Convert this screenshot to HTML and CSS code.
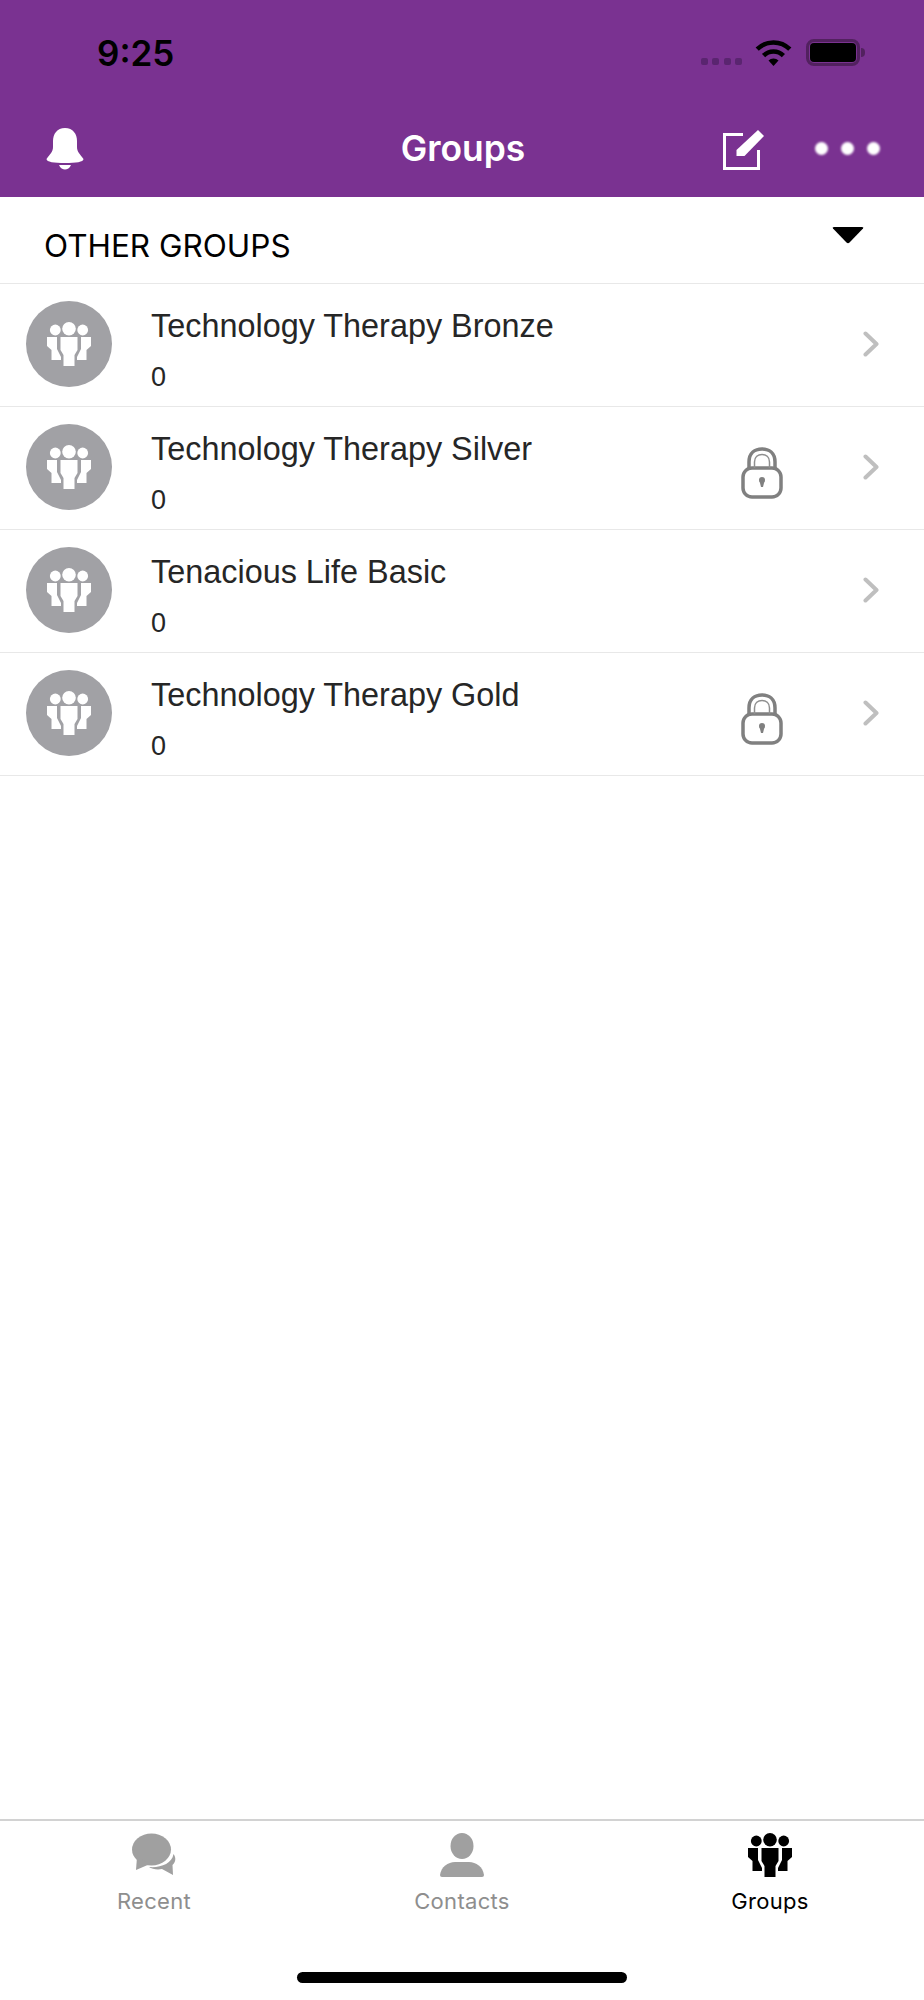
FILE: index.html
```html
<!DOCTYPE html>
<html lang="en">
<head>
<meta charset="utf-8">
<title>Groups</title>
<link rel="stylesheet" href="styles.css">
</head>
<body>
<svg class="defs" width="0" height="0" aria-hidden="true">
  <symbol id="people" viewBox="0 0 44 44">
    <circle cx="8.300" cy="8" r="5.400"/><circle cx="35.700" cy="8" r="5.400"/><circle cx="22" cy="6.800" r="6.800"/>
    <path d="M13.500 15H30.500V28L27.500 33V44H16.500V33L13.500 28Z"/>
    <path d="M0 15H10V27L14 35V38H4.500V28L0 24Z"/>
    <path d="M44 15H34V27L30 35V38H39.500V28L44 24Z"/>
  </symbol>
  <symbol id="lock" viewBox="0 0 42 52">
    <rect class="lock-line" x="2" y="21" width="38" height="29" rx="9"/>
    <path class="lock-line" d="M8 21V15C8 6 14 2 21 2S34 6 34 15V21"/>
    <path class="lock-line thin" d="M13.500 21V15C13.500 10 17 7.500 21 7.500S28.500 10 28.500 15V21"/>
    <circle class="lock-fill" cx="21" cy="33" r="3"/><path class="lock-fill" d="M18.500 34H23.500L22 40H20Z"/>
  </symbol>
  <symbol id="chev" viewBox="0 0 16 26"><path class="chev-line" d="M2.500 2.500L13.500 13L2.500 23.500"/></symbol>
</svg>
<div class="app">
  <header class="top">
    <div class="status">
      <span class="time">9:25</span>
      <div class="status-icons">
        <div class="signal"><i></i><i></i><i></i><i></i></div>
        <svg class="wifi" viewBox="0 0 37 27"><path class="wifi-arc" d="M2.200 10.200A23 23 0 0 1 34.800 10.200"/><path class="wifi-arc" d="M8.600 16.600A14 14 0 0 1 28.400 16.600"/><path d="M18.500 27L13.500 21.500A7 7 0 0 1 23.500 21.500Z"/></svg>
        <div class="battery"><div class="battery-fill"></div></div>
        <div class="battery-nub"></div>
      </div>
    </div>
    <nav class="nav">
      <div class="nav-left">
        <svg class="bell" viewBox="0 0 38 42"><path d="M19 0C27 0 31 6 31 13V19C31 24 34 26 37.500 31C37.500 34 30 35 19 35S.5 34 .5 31C4 26 7 24 7 19V13C7 6 11 0 19 0Z"/><path d="M13 37H25C24 40 21 41.500 19 41.500S14 40 13 37Z"/></svg>
      </div>
      <h1 class="title">Groups</h1>
      <div class="nav-right">
        <svg class="edit" viewBox="0 0 42 41"><path class="edit-line" d="M20 4.500H1.500V38.500H35.500V20"/><path d="M13.500 20L35 0L41 6L21.500 26H13.500Z"/></svg>
        <div class="more"><i></i><i></i><i></i></div>
      </div>
    </nav>
  </header>
  <main class="main">
    <div class="section">
      <span class="section-title">OTHER GROUPS</span>
      <svg class="caret" viewBox="0 0 32 18"><path d="M2 1H30Q32 1 31 2.500L17.500 16.500Q16 18 14.500 16.500L1 2.500Q0 1 2 1Z"/></svg>
    </div>
    <div class="row">
      <div class="avatar"><svg class="people"><use href="#people"/></svg></div>
      <div class="info"><div class="name">Technology Therapy Bronze</div><div class="count">0</div></div>
      <svg class="chevron"><use href="#chev"/></svg>
    </div>
    <div class="row">
      <div class="avatar"><svg class="people"><use href="#people"/></svg></div>
      <div class="info"><div class="name">Technology Therapy Silver</div><div class="count">0</div></div>
      <svg class="lock"><use href="#lock"/></svg>
      <svg class="chevron"><use href="#chev"/></svg>
    </div>
    <div class="row">
      <div class="avatar"><svg class="people"><use href="#people"/></svg></div>
      <div class="info"><div class="name">Tenacious Life Basic</div><div class="count">0</div></div>
      <svg class="chevron"><use href="#chev"/></svg>
    </div>
    <div class="row">
      <div class="avatar"><svg class="people"><use href="#people"/></svg></div>
      <div class="info"><div class="name">Technology Therapy Gold</div><div class="count">0</div></div>
      <svg class="lock"><use href="#lock"/></svg>
      <svg class="chevron"><use href="#chev"/></svg>
    </div>
  </main>
  <footer class="tabs">
    <div class="tab-row">
      <div class="tab">
        <svg class="tab-icon" viewBox="0 0 44 44"><ellipse cx="19.500" cy="16.500" rx="19.500" ry="16"/><path d="M5 24L4 37L18 31Z"/><path d="M41.500 21C44.500 25 43.500 29 40.500 32L41 42L30 36C25 37 20 36 17 34C28 35 40 31 41.500 21Z"/></svg>
        <span class="tab-label">Recent</span>
      </div>
      <div class="tab">
        <svg class="tab-icon" viewBox="0 0 44 44"><ellipse cx="22" cy="13" rx="11.500" ry="13"/><path d="M0 42C1 34 8 29 15 29H29C36 29 43 34 44 42Q44 44 42 44H2Q0 44 0 42Z"/></svg>
        <span class="tab-label">Contacts</span>
      </div>
      <div class="tab active">
        <svg class="tab-icon"><use href="#people"/></svg>
        <span class="tab-label">Groups</span>
      </div>
    </div>
    <div class="home"></div>
  </footer>
</div>
</body>
</html>
```
FILE: styles.css
```css
* { box-sizing: border-box; }
html, body { margin: 0; padding: 0; background: #fff; }
.defs { display: block; height: 0; }
.app {
  width: 924px;
  height: 2000px;
  display: flex;
  flex-direction: column;
  overflow: hidden;
  font-family: "Liberation Sans", Arial, sans-serif;
}

/* header */
.top { height: 197px; background: #7a3291; display: flex; flex-direction: column; }
.status { height: 104px; display: flex; justify-content: space-between; padding: 33px 59px 0 97px; }
.time { font: 600 35px/40px Inter, sans-serif; color: #000; }
.status-icons { display: flex; align-items: flex-start; padding-top: 6px; }
.signal { display: flex; gap: 4.500px; margin-top: 19px; margin-right: 13px; }
.signal i { width: 7px; height: 7px; border-radius: 2px; background: #5a2570; }
.wifi { width: 37px; height: 27px; margin-right: 14px; fill: #000; }
.wifi-arc { fill: none; stroke: #000; stroke-width: 4.500; }
.battery { width: 54px; height: 27px; border: 3px solid #52215f; border-radius: 8px; padding: 1px; }
.battery-fill { width: 100%; height: 100%; background: #000; border-radius: 4px; }
.battery-nub { width: 4px; height: 9px; margin-top: 9px; margin-left: 1px; background: #52215f; border-radius: 0 4px 4px 0; }
.nav {
  flex: 1;
  display: grid;
  grid-template-columns: 1fr auto 1fr;
  align-items: start;
  padding: 24px 44px 0 46px;
}
.nav-left { display: flex; }
.nav-right { display: flex; justify-content: flex-end; }
.bell { width: 38px; height: 42px; fill: #fff; }
.title {
  margin: 0;
  text-align: center;
  font: 600 35.400px/42px Inter, sans-serif;
  color: #fff;
}
.edit { width: 42px; height: 41px; margin-top: 2px; margin-right: 50px; fill: #fff; flex: none; }
.edit-line { fill: none; stroke: #fff; stroke-width: 3; }
.more { display: flex; gap: 13px; margin-top: 14px; }
.more i { width: 13px; height: 13px; border-radius: 50%; background: #fff; filter: blur(1px); }

/* list */
.main { flex: 1; }
.section {
  height: 87px;
  border-bottom: 1px solid #e8e8e8;
  display: flex;
  justify-content: space-between;
  padding: 30px 60px 0 44px;
}
.section-title { font: 400 31.500px/38px Inter, sans-serif; color: #000; }
.caret { width: 32px; height: 18px; margin-top: -1px; flex: none; fill: #000; }
.row {
  height: 123px;
  border-bottom: 1px solid #e8e8e8;
  display: flex;
  align-items: center;
  padding: 0 45px 3px 26px;
}
.avatar {
  width: 86px;
  height: 86px;
  flex: none;
  border-radius: 50%;
  background: #a1a1a5;
  display: flex;
  align-items: center;
  justify-content: center;
}
.people { width: 44px; height: 44px; fill: #fff; }
.info { flex: 1; margin-left: 39px; padding-top: 10px; }
.name { font-size: 32.400px; line-height: 40px; color: #262626; }
.count { font-size: 27px; line-height: 30px; margin-top: 16px; color: #262626; }
.lock { width: 42px; height: 52px; margin-top: 12px; margin-right: 80px; flex: none; }
.lock-line { fill: none; stroke: #808080; stroke-width: 3.500; }
.lock-line.thin { stroke: #8f8f8f; stroke-width: 1.500; }
.lock-fill { fill: #808080; }
.chevron { width: 16px; height: 26px; margin-top: 1px; flex: none; }
.chev-line { fill: none; stroke: #bfbfbf; stroke-width: 4; stroke-linecap: round; stroke-linejoin: round; }

/* tab bar */
.tabs { height: 181px; border-top: 2px solid #d2d2d2; display: flex; flex-direction: column; align-items: center; }
.tab-row { width: 100%; display: grid; grid-template-columns: repeat(3, 1fr); padding-top: 12px; }
.tab { display: flex; flex-direction: column; align-items: center; fill: #a0a0a0; color: #8e8e8e; }
.tab.active { fill: #000; color: #000; }
.tab-icon { width: 44px; height: 44px; }
.tab-label { font: 400 22px/28px Inter, sans-serif; letter-spacing: .3px; margin-top: 10px; }
.home { width: 330px; height: 11px; margin-top: 57px; border-radius: 6px; background: #000; }
```
